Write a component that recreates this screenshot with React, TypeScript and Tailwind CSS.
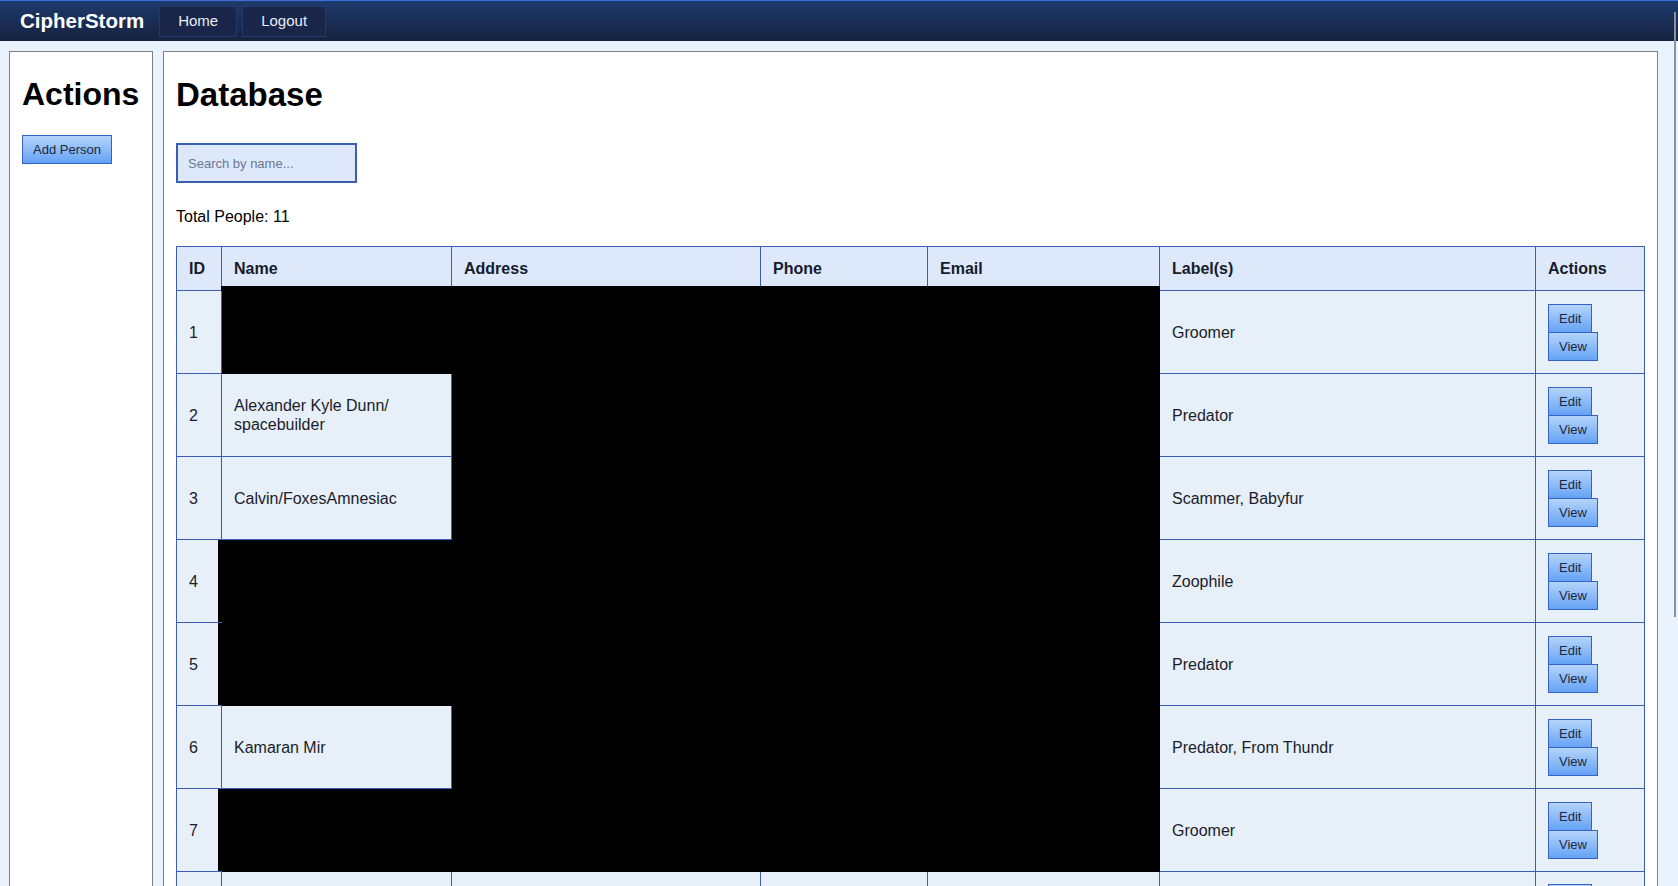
import { useState } from "react";

interface Person {
  id: number;
  name: string;
  labels: string;
  hideName: boolean;
}

const people: Person[] = [
  { id: 1, name: "", labels: "Groomer", hideName: true },
  { id: 2, name: "Alexander Kyle Dunn/ spacebuilder", labels: "Predator", hideName: false },
  { id: 3, name: "Calvin/FoxesAmnesiac", labels: "Scammer, Babyfur", hideName: false },
  { id: 4, name: "", labels: "Zoophile", hideName: true },
  { id: 5, name: "", labels: "Predator", hideName: true },
  { id: 6, name: "Kamaran Mir", labels: "Predator, From Thundr", hideName: false },
  { id: 7, name: "", labels: "Groomer", hideName: true },
];

const btn =
  "border border-[#3562c4] bg-gradient-to-b from-[#b4d4fb] to-[#64a2f4] text-[13px] text-[#1d2840] px-[10px] flex items-center";

export default function App() {
  const [search, setSearch] = useState("");

  const th = "border border-[#3a5db5] bg-[#dde9fb] h-[44px] px-3 text-left text-[16px] font-bold text-[#161b2c]";
  const td = "border border-[#3a5db5] bg-[#e7eff9] h-[83px] px-3 text-[16px] leading-[19px] text-[#1a1d29]";
  const black = "border border-black bg-black h-[83px] relative";

  return (
    <div className="relative h-[886px] overflow-hidden bg-[#eaf3fd] font-['Liberation_Sans',Arial,sans-serif]">
      <nav className="h-[41px] border-t border-[#3d6fdc] bg-gradient-to-b from-[#1d3a6d] to-[#16223f] flex items-center pl-[20px]">
        <span className="text-[20.5px] font-bold text-white">CipherStorm</span>
        <div className="ml-[15px] flex gap-[5px]">
          <a className="h-[31px] px-[18px] border border-[#213a6c] bg-[#19264a] text-[15px] text-[#e8edf8] flex items-center">
            Home
          </a>
          <a className="h-[31px] px-[18px] border border-[#213a6c] bg-[#19264a] text-[15px] text-[#e8edf8] flex items-center">
            Logout
          </a>
        </div>
      </nav>

      <div className="flex gap-[10px] pl-[9px] pr-[20px] pt-[10px]">
        <aside className="w-[144px] shrink-0 border border-[#808080] bg-white px-[12px] pt-[24px]">
          <h1 className="text-[32px] leading-[37px] font-bold text-black">Actions</h1>
          <button className={btn + " mt-[22px] h-[29px]"}>Add Person</button>
        </aside>

        <main className="flex-1 border border-[#808080] bg-white px-[12px] pt-[24px]">
          <h1 className="text-[33px] leading-[37px] font-bold text-black">Database</h1>
          <input
            value={search}
            onChange={(e) => setSearch(e.target.value)}
            placeholder="Search by name..."
            className="mt-[30px] block h-[40px] w-[181px] border-2 border-[#3a5db5] bg-[#dde9fb] px-[10px] text-[13px] outline-none placeholder:text-[#6b7890]"
          />
          <p className="mt-[22px] text-[16px] leading-[24px] text-black">Total People: 11</p>

          <table className="mt-[17px] w-full table-fixed border-collapse">
            <colgroup>
              <col className="w-[45px]" />
              <col className="w-[230px]" />
              <col className="w-[309px]" />
              <col className="w-[167px]" />
              <col className="w-[232px]" />
              <col className="w-[376px]" />
              <col className="w-[109px]" />
            </colgroup>
            <thead>
              <tr>
                <th className={th}>ID</th>
                {["Name", "Address", "Phone", "Email"].map((h) => (
                  <th key={h} className={th + " relative"}>
                    {h}
                    <span className="absolute -left-px -right-px -bottom-px h-[5px] bg-black" />
                  </th>
                ))}
                <th className={th}>Label(s)</th>
                <th className={th}>Actions</th>
              </tr>
            </thead>
            <tbody>
              {people.map((p) => (
                <tr key={p.id}>
                  <td className={td}>{p.id}</td>
                  {p.hideName ? (
                    <td className={black}>
                      {p.id !== 1 && <span className="absolute -left-[4px] top-0 bottom-0 w-[4px] bg-black" />}
                    </td>
                  ) : (
                    <td className={td}>{p.name}</td>
                  )}
                  <td className={black} />
                  <td className={black} />
                  <td className={black} />
                  <td className={td}>{p.labels}</td>
                  <td className={td}>
                    <div className="flex flex-col items-start">
                      <button className={btn + " h-[29px]"}>Edit</button>
                      <button className={btn + " h-[29px] -mt-px"}>View</button>
                    </div>
                  </td>
                </tr>
              ))}
              {/* row 8 only peeks in at the bottom edge */}
              <tr>
                <td className={td} />
                <td className={td} />
                <td className={td} />
                <td className={td} />
                <td className={td} />
                <td className={td} />
                <td className={td + " align-top pt-[12px]"}>
                  <div className="h-[29px] w-[44px] border border-[#3562c4] bg-gradient-to-b from-[#b4d4fb] to-[#64a2f4]" />
                </td>
              </tr>
            </tbody>
          </table>
        </main>
      </div>

      <div className="absolute top-[12px] right-[2px] w-[2px] h-[605px] bg-[#8b9199]" />
    </div>
  );
}
